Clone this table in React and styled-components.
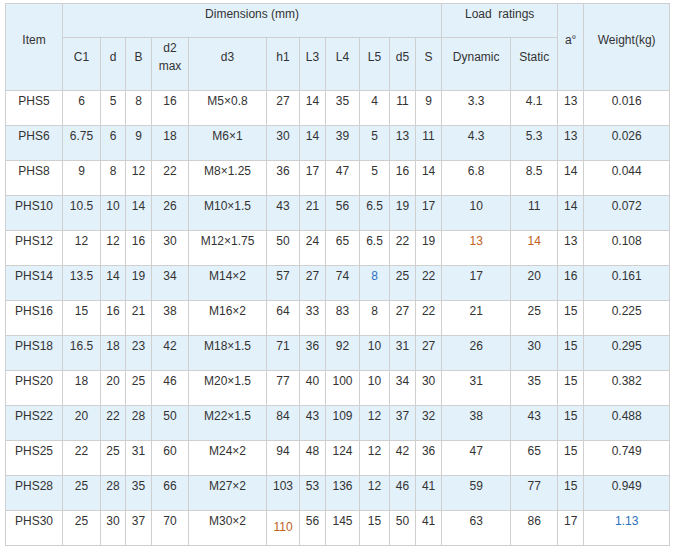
import React from 'react';
import styled, { createGlobalStyle } from 'styled-components';

const GlobalStyle = createGlobalStyle`
  body {
    margin: 0;
    background: #fff;
    font-family: "Liberation Sans", Arial, sans-serif;
  }
`;

const Wrapper = styled.div`
  padding: 3px 5px 0 5px;
`;

const Table = styled.table`
  width: 665px;
  table-layout: fixed;
  border-collapse: collapse;
  font-size: 12px;
  line-height: 18px;
  color: #333;
`;

const HeadRow = styled.tr`
  height: ${(p) => p.$h}px;
  background: #e3f1fb;
`;

const Row = styled.tr`
  height: 35px;
  background: ${(p) => (p.$alt ? '#e3f1fb' : '#fff')};
`;

const Cell = styled.td`
  border: 1px solid #cfcfcf;
  text-align: center;
  vertical-align: middle;
  padding: ${(p) => (p.$drop ? '6px 0 8px' : '0 0 14px')};
  color: ${(p) => (p.$tone === 'orange' ? '#c0601c' : p.$tone === 'blue' ? '#2b72bd' : 'inherit')};
  white-space: nowrap;
`;

const HeadCell = styled(Cell).attrs({ as: 'th' })`
  font-weight: normal;
  white-space: normal;
`;

const widths = [57, 38, 25, 26, 37, 78, 33, 26, 34, 30, 26, 26, 69, 47, 26, 86];

const rows = [
  ['PHS5', '6', '5', '8', '16', 'M5×0.8', '27', '14', '35', '4', '11', '9', '3.3', '4.1', '13', '0.016'],
  ['PHS6', '6.75', '6', '9', '18', 'M6×1', '30', '14', '39', '5', '13', '11', '4.3', '5.3', '13', '0.026'],
  ['PHS8', '9', '8', '12', '22', 'M8×1.25', '36', '17', '47', '5', '16', '14', '6.8', '8.5', '14', '0.044'],
  ['PHS10', '10.5', '10', '14', '26', 'M10×1.5', '43', '21', '56', '6.5', '19', '17', '10', '11', '14', '0.072'],
  ['PHS12', '12', '12', '16', '30', 'M12×1.75', '50', '24', '65', '6.5', '22', '19', '13', '14', '13', '0.108'],
  ['PHS14', '13.5', '14', '19', '34', 'M14×2', '57', '27', '74', '8', '25', '22', '17', '20', '16', '0.161'],
  ['PHS16', '15', '16', '21', '38', 'M16×2', '64', '33', '83', '8', '27', '22', '21', '25', '15', '0.225'],
  ['PHS18', '16.5', '18', '23', '42', 'M18×1.5', '71', '36', '92', '10', '31', '27', '26', '30', '15', '0.295'],
  ['PHS20', '18', '20', '25', '46', 'M20×1.5', '77', '40', '100', '10', '34', '30', '31', '35', '15', '0.382'],
  ['PHS22', '20', '22', '28', '50', 'M22×1.5', '84', '43', '109', '12', '37', '32', '38', '43', '15', '0.488'],
  ['PHS25', '22', '25', '31', '60', 'M24×2', '94', '48', '124', '12', '42', '36', '47', '65', '15', '0.749'],
  ['PHS28', '25', '28', '35', '66', 'M27×2', '103', '53', '136', '12', '46', '41', '59', '77', '15', '0.949'],
  ['PHS30', '25', '30', '37', '70', 'M30×2', '110', '56', '145', '15', '50', '41', '63', '86', '17', '1.13'],
];

// odd colouring carried over from the source page
const tones = {
  '4-12': 'orange',
  '4-13': 'orange',
  '5-9': 'blue',
  '12-6': 'orange',
  '12-15': 'blue',
};

function App() {
  return (
    <Wrapper>
      <GlobalStyle />
      <Table>
        <colgroup>
          {widths.map((w, i) => (
            <col key={i} style={{ width: w }} />
          ))}
        </colgroup>
        <thead>
          <HeadRow $h={34}>
            <HeadCell rowSpan={2}>Item</HeadCell>
            <HeadCell colSpan={11}>Dimensions (mm)</HeadCell>
            <HeadCell colSpan={2}>Load&nbsp; ratings</HeadCell>
            <HeadCell rowSpan={2}>a°</HeadCell>
            <HeadCell rowSpan={2}>Weight(kg)</HeadCell>
          </HeadRow>
          <HeadRow $h={53}>
            <HeadCell>C1</HeadCell>
            <HeadCell>d</HeadCell>
            <HeadCell>B</HeadCell>
            <HeadCell>
              d2
              <br />
              max
            </HeadCell>
            <HeadCell>d3</HeadCell>
            <HeadCell>h1</HeadCell>
            <HeadCell>L3</HeadCell>
            <HeadCell>L4</HeadCell>
            <HeadCell>L5</HeadCell>
            <HeadCell>d5</HeadCell>
            <HeadCell>S</HeadCell>
            <HeadCell>Dynamic</HeadCell>
            <HeadCell>Static</HeadCell>
          </HeadRow>
        </thead>
        <tbody>
          {rows.map((r, ri) => (
            <Row key={r[0]} $alt={ri % 2 === 1}>
              {r.map((v, ci) => (
                <Cell key={ci} $tone={tones[`${ri}-${ci}`]} $drop={ri === 12 && ci === 6}>
                  {v}
                </Cell>
              ))}
            </Row>
          ))}
        </tbody>
      </Table>
    </Wrapper>
  );
}

export default App;
